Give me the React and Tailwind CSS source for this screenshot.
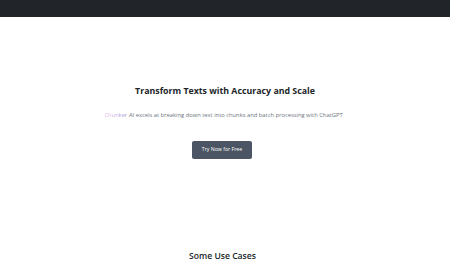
import React from 'react';

const App = () => {
  return (
    <div className="min-h-screen bg-white" style={{ fontFamily: '"Open Sans", "Noto Sans", sans-serif' }}>
      <div className="h-[17px] bg-[#212529]" />

      <div className="flex flex-col items-center pt-[65px]">
        <h1 className="text-[8.8px] leading-[18px] font-bold text-[#212529]">Transform Texts with Accuracy and Scale</h1>
        <p className="mt-[10px] mr-[3px] text-[5.8px] leading-[10px] text-[#6c757d]">
          <span className="bg-gradient-to-r from-[#e9b6e0] to-[#9a8fd8] bg-clip-text text-transparent">Chunker</span> AI excels at breaking down text into chunks and batch processing with ChatGPT
        </p>
        <button className="mt-[21px] mr-[6px] h-[18px] w-[60px] rounded-[2px] bg-[#4b5563] text-[5.2px] text-white">
          Try Now for Free
        </button>
      </div>

      <div className="flex justify-center pt-[90px]">
        <h2 className="mr-[5px] text-[8.6px] leading-[14px] font-semibold text-[#212529]">Some Use Cases</h2>
      </div>
    </div>
  );
};

export default App;
